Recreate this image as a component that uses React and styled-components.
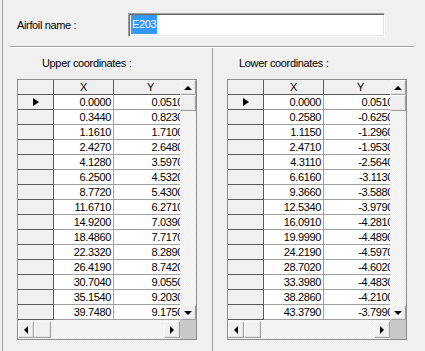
import React from "react";
import styled, { createGlobalStyle } from "styled-components";

const GlobalStyle = createGlobalStyle`
  body {
    margin: 0;
    background: #f0f0f0;
  }
`

const Window = styled.div`
  width: 425px;
  height: 351px;
  overflow: hidden;
  background: #f0f0f0;
  display: flex;
  font-family: "Liberation Sans", Arial, sans-serif;
  font-size: 11px;
  letter-spacing: -0.35px;
  color: #000;
`
const Frame = styled.div`
  margin-left: 2px;
  border-left: 1px solid #a0a0a0;
  flex: 1;
  display: flex;
  flex-direction: column;
`
const NameRow = styled.div`
  height: 46px;
  box-sizing: border-box;
  padding: 13px 0 0 14px;
  display: flex;
  align-items: flex-start;
`
const NameLabel = styled.div`
  width: 111px;
  line-height: 25px;
`
const TextBox = styled.div`
  width: 257px;
  height: 24px;
  box-sizing: border-box;
  background: #fff;
  border: 1px solid;
  border-color: #a0a0a0 #fff #fff #a0a0a0;
  box-shadow: inset 1px 1px #696969, inset -1px -1px #e3e3e3;
  padding: 1px 0 0 2px;
`
const Selection = styled.span`
  display: inline-block;
  background: #3399ff;
  color: #fff;
  line-height: 19px;
  padding: 0 1px;
`
const Separator = styled.div`
  margin: 0 11px 0 7px;
  border-top: 1px solid #a0a0a0;
  border-bottom: 1px solid #fff;
`
const Panes = styled.div`
  flex: 1;
  display: flex;
`
const Pane = styled.div`
  width: ${p => p.width}px;
  box-sizing: border-box;
  padding: 8px 0 0 14px;
  border-right: ${p => (p.divider ? "1px solid #a0a0a0" : "none")};
`
const PaneLabel = styled.div`
  line-height: 14px;
  padding-left: ${p => p.indent}px;
  margin-bottom: 9px;
`
const Grid = styled.div`
  width: 180px;
  height: 261px;
  box-sizing: border-box;
  border: 1px solid #8c8c8c;
  background: #fff;
  display: flex;
  flex-direction: column;
`
const GridBody = styled.div`
  height: 240px;
  display: flex;
`
const DataArea = styled.div`
  flex: 1;
  overflow: hidden;
`
const Row = styled.div`
  display: flex;
  height: 15px;
`
const FixedCell = styled.div`
  flex: none;
  width: ${p => p.width}px;
  box-sizing: border-box;
  background: #f0f0f0;
  border-right: 1px solid #5a5a5a;
  border-bottom: 1px solid #5a5a5a;
  line-height: 14px;
  text-align: center;
  display: flex;
  align-items: center;
  justify-content: center;
`
const DataCell = styled.div`
  flex: none;
  width: ${p => p.width}px;
  box-sizing: border-box;
  border-right: 1px solid #a0a0a0;
  border-bottom: 1px solid #a0a0a0;
  line-height: 14px;
  text-align: right;
  padding-right: ${p => p.pad}px;
  white-space: nowrap;
`
const Pointer = styled.div`
  width: 0;
  height: 0;
  border-left: 6px solid #000;
  border-top: 4.5px solid transparent;
  border-bottom: 4.5px solid transparent;
  margin-left: 1px;
`
const VScroll = styled.div`
  width: 16px;
  display: flex;
  flex-direction: column;
`
const Track = styled.div`
  flex: 1;
  background: repeating-conic-gradient(#ffffff 0 25%, #ececec 0 50%) 0 0 / 2px 2px;
`
const ScrollButton = styled.div`
  flex: none;
  width: ${p => p.w}px;
  height: ${p => p.h}px;
  box-sizing: border-box;
  background: #f0f0f0;
  border: 1px solid;
  border-color: #fff #a0a0a0 #a0a0a0 #fff;
  box-shadow: inset -1px -1px #e3e3e3;
  display: flex;
  align-items: center;
  justify-content: center;
`
const Arrow = styled.div`
  width: 0;
  height: 0;
  border: 4px solid transparent;
  ${p => p.dir === "up" && "border-bottom: 4px solid #000; border-top-width: 0;"}
  ${p => p.dir === "down" && "border-top: 4px solid #000; border-bottom-width: 0;"}
  ${p => p.dir === "left" && "border-right: 4px solid #000; border-left-width: 0;"}
  ${p => p.dir === "right" && "border-left: 4px solid #000; border-right-width: 0;"}
`
const BottomRow = styled.div`
  height: 19px;
  display: flex;
`
const HScroll = styled.div`
  flex: 1;
  display: flex;
  align-items: center;
  background: repeating-conic-gradient(#ffffff 0 25%, #ececec 0 50%) 0 0 / 2px 2px;
`
const HTrack = styled.div`
  flex: 1;
`
const Corner = styled.div`
  width: 16px;
  background: #c8c8c8;
`

const upper = [
  ["0.0000", "0.0510"], ["0.3440", "0.8230"], ["1.1610", "1.7100"],
  ["2.4270", "2.6480"], ["4.1280", "3.5970"], ["6.2500", "4.5320"],
  ["8.7720", "5.4300"], ["11.6710", "6.2710"], ["14.9200", "7.0390"],
  ["18.4860", "7.7170"], ["22.3320", "8.2890"], ["26.4190", "8.7420"],
  ["30.7040", "9.0550"], ["35.1540", "9.2030"], ["39.7480", "9.1750"],
]
const lower = [
  ["0.0000", "0.0510"], ["0.2580", "-0.6250"], ["1.1150", "-1.2960"],
  ["2.4710", "-1.9530"], ["4.3110", "-2.5640"], ["6.6160", "-3.1130"],
  ["9.3660", "-3.5880"], ["12.5340", "-3.9790"], ["16.0910", "-4.2810"],
  ["19.9990", "-4.4890"], ["24.2190", "-4.5970"], ["28.7020", "-4.6020"],
  ["33.3980", "-4.4830"], ["38.2860", "-4.2100"], ["43.3790", "-3.7990"],
]

function CoordGrid({ rows }) {
  return (
    <Grid>
      <GridBody>
        <DataArea>
          <Row>
            <FixedCell width={36} />
            <FixedCell width={60}>X</FixedCell>
            <FixedCell width={74}>Y</FixedCell>
          </Row>
          {rows.map(([x, y], i) => (
            <Row key={i}>
              <FixedCell width={36}>{i === 0 && <Pointer />}</FixedCell>
              <DataCell width={60} pad={2}>{x}</DataCell>
              <DataCell width={74} pad={4}>{y}</DataCell>
            </Row>
          ))}
        </DataArea>
        <VScroll>
          <ScrollButton w={16} h={15}><Arrow dir="up" /></ScrollButton>
          <ScrollButton w={16} h={16} />
          <Track />
          <ScrollButton w={16} h={15}><Arrow dir="down" /></ScrollButton>
        </VScroll>
      </GridBody>
      <BottomRow>
        <HScroll>
          <ScrollButton w={16} h={17}><Arrow dir="left" /></ScrollButton>
          <ScrollButton w={17} h={17} />
          <HTrack />
          <ScrollButton w={16} h={17}><Arrow dir="right" /></ScrollButton>
        </HScroll>
        <Corner />
      </BottomRow>
    </Grid>
  )
}

function App() {
  return (
    <Window>
      <GlobalStyle />
      <Frame>
        <NameRow>
          <NameLabel>Airfoil name :</NameLabel>
          <TextBox><Selection>E203</Selection></TextBox>
        </NameRow>
        <Separator />
        <Panes>
          <Pane width={210} divider>
            <PaneLabel indent={25}>Upper coordinates :</PaneLabel>
            <CoordGrid rows={upper} />
          </Pane>
          <Pane width={212}>
            <PaneLabel indent={12}>Lower coordinates :</PaneLabel>
            <CoordGrid rows={lower} />
          </Pane>
        </Panes>
      </Frame>
    </Window>
  )
}

export default App
